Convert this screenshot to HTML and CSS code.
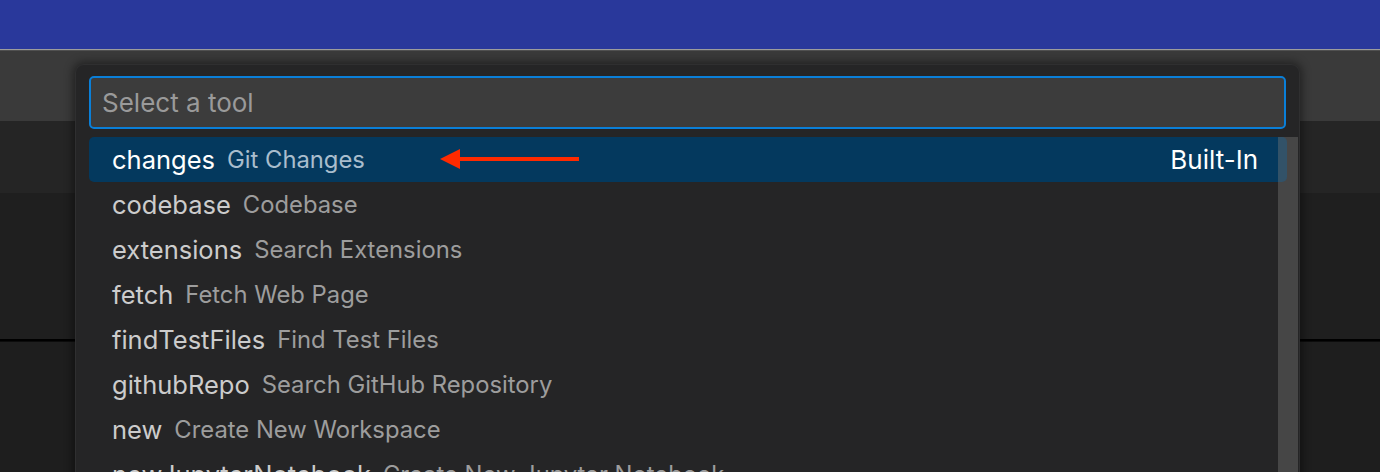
FILE: index.html
```html
<!DOCTYPE html>
<html>
<head>
<meta charset="utf-8">
<link rel="stylesheet" href="styles.css">
</head>
<body>
<div class="window">
  <div class="titlebar"></div>
  <div class="title-edge"></div>
  <div class="toolbar"></div>
  <div class="panel"></div>
  <div class="editor"></div>
  <div class="editor-sep"></div>
  <div class="editor lower"></div>

  <div class="quickpick">
    <div class="input-wrap">
      <div class="input">Select a tool</div>
    </div>
    <div class="list">
      <div class="row selected">
        <span class="label">changes</span><span class="desc">Git Changes</span>
        <span class="tag">Built-In</span>
      </div>
      <div class="row"><span class="label">codebase</span><span class="desc">Codebase</span></div>
      <div class="row"><span class="label">extensions</span><span class="desc">Search Extensions</span></div>
      <div class="row"><span class="label">fetch</span><span class="desc">Fetch Web Page</span></div>
      <div class="row"><span class="label">findTestFiles</span><span class="desc">Find Test Files</span></div>
      <div class="row"><span class="label">githubRepo</span><span class="desc">Search GitHub Repository</span></div>
      <div class="row"><span class="label">new</span><span class="desc">Create New Workspace</span></div>
      <div class="row"><span class="label">newJupyterNotebook</span><span class="desc">Create New Jupyter Notebook</span></div>
      <div class="scrollbar"></div>
    </div>
    <svg class="arrow" width="142" height="24" viewBox="0 0 142 24" xmlns="http://www.w3.org/2000/svg">
      <path d="M0 12 L20 2 L20 22 Z" fill="#ff2a00"/>
      <rect x="18" y="10" width="121" height="4" fill="#ff2a00"/>
    </svg>
  </div>
</div>
</body>
</html>
```
FILE: styles.css
```css
* { box-sizing: border-box; }
html, body {
  margin: 0;
  padding: 0;
  width: 1380px;
  height: 472px;
  overflow: hidden;
  background: #1e1e1e;
}
.window {
  position: relative;
  width: 1380px;
  height: 472px;
  overflow: hidden;
  font-family: Inter, "Noto Sans", sans-serif;
}
.titlebar { height: 49px; background: #29389b; }
.title-edge { height: 2px; background: linear-gradient(#9c9c9c 50%, #505050 50%); }
.toolbar { height: 70px; background: #3a3a3a; }
.panel { height: 72px; background: #252525; }
.editor { height: 146px; background: #1f1f1f; }
.editor-sep { height: 3px; background: linear-gradient(#000 60%, #141414); }
.editor.lower { height: 200px; background: #1e1e1e; }

.quickpick {
  position: absolute;
  left: 75px;
  top: 64px;
  width: 1225px;
  height: 460px;
  background: #252526;
  border: 1px solid #2f2f30;
  border-radius: 9px;
  box-shadow: 0 0 10px 2px rgba(0, 0, 0, 0.45);
  padding: 11px 13px 0 13px;
}
.input {
  height: 53px;
  background: #3c3c3c;
  border: 2px solid #0a7fd8;
  border-radius: 5px;
  padding-left: 11px;
  display: flex;
  align-items: center;
  color: #9a9a9a;
  font-size: 26px;
}
.list {
  position: relative;
  margin-top: 8px;
  margin-right: -12px;
}
.row {
  height: 45px;
  display: flex;
  align-items: center;
  padding-left: 23px;
  padding-right: 29px;
  margin-right: 11px;
  border-radius: 5px;
  white-space: nowrap;
}
.label { color: #cccccc; font-size: 25.5px; }
.desc { color: #9d9d9d; margin-left: 12px; font-size: 23.8px; }
.row.selected { background: #04395e; }
.row.selected .label { color: #ffffff; }
.row.selected .desc { color: #a9bdcd; }
.tag { margin-left: auto; color: #ffffff; font-size: 26px; }
.scrollbar {
  position: absolute;
  right: 0;
  top: 0;
  width: 20px;
  height: 400px;
  background: rgba(121, 121, 121, 0.4);
}
.arrow {
  position: absolute;
  left: 364px;
  top: 82px;
}
```
